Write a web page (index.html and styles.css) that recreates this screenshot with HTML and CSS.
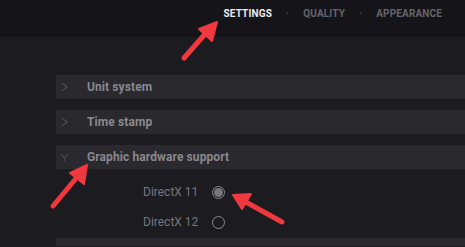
FILE: index.html
```html
<!DOCTYPE html>
<html>
<head>
<meta charset="utf-8">
<link rel="stylesheet" href="styles.css">
</head>
<body>
<header class="topbar">
  <nav class="nav">
    <span class="nav-item active">SETTINGS</span>
    <span class="nav-dot">·</span>
    <span class="nav-item">QUALITY</span>
    <span class="nav-dot">·</span>
    <span class="nav-item">APPEARANCE</span>
  </nav>
</header>
<main class="panel">
  <div class="row">
    <svg class="chev" width="31" height="24" viewBox="0 0 31 24"><polyline points="6,8 11,12 6,16" /></svg><span class="row-title">Unit system</span>
  </div>
  <div class="row">
    <svg class="chev" width="31" height="24" viewBox="0 0 31 24"><polyline points="6,8 11,12 6,16" /></svg><span class="row-title">Time stamp</span>
  </div>
  <div class="row">
    <svg class="chev" width="31" height="24" viewBox="0 0 31 24"><polyline points="5,9 8.5,13 12,9" /><line x1="8.5" y1="13" x2="8.5" y2="16" /></svg><span class="row-title">Graphic hardware support</span>
  </div>
  <div class="options">
    <div class="option"><span class="opt-label">DirectX 11</span><span class="radio checked"></span></div>
    <div class="option"><span class="opt-label">DirectX 12</span><span class="radio"></span></div>
  </div>
  <div class="row last"></div>
</main>
<svg class="arrows" width="465" height="247" viewBox="0 0 465 247">
  <g stroke="#f0393f" stroke-width="5" stroke-linecap="round" fill="#f0393f">
    <line x1="184" y1="58" x2="206" y2="33"/>
    <line x1="53" y1="206" x2="78" y2="176"/>
    <line x1="282" y1="222" x2="244" y2="201"/>
  </g>
  <g fill="#f0393f" stroke="#f0393f" stroke-width="2" stroke-linejoin="round">
    <polygon points="217,22 212,41 199,29"/>
    <polygon points="87,165 84,184 70,173"/>
    <polygon points="233,195 251,194 242,209"/>
  </g>
</svg>
</body>
</html>
```
FILE: styles.css
```css
html, body {
  margin: 0;
  padding: 0;
}
body {
  width: 465px;
  height: 247px;
  overflow: hidden;
  background: #1c1b20;
  font-family: Roboto, "Liberation Sans", sans-serif;
  position: relative;
}
.topbar {
  height: 37px;
  background: #151419;
  display: flex;
  justify-content: flex-end;
  align-items: flex-start;
  padding: 8px 23px 0 0;
  box-sizing: border-box;
}
.nav {
  display: flex;
  align-items: center;
  gap: 14px;
  font-size: 10px;
  line-height: 12px;
  font-weight: 700;
  letter-spacing: 0.15px;
}
.nav-item {
  color: #66656b;
}
.nav-item.active {
  color: #ececee;
}
.nav-dot {
  color: #46454b;
  font-size: 10px;
}
.panel {
  padding: 38px 0 0 56px;
  display: flex;
  flex-direction: column;
  height: 209px;
  box-sizing: border-box;
  overflow: hidden;
}
.row {
  height: 24px;
  flex: none;
  background: #2a292e;
  display: flex;
  align-items: center;
  margin-bottom: 11px;
}
.chev {
  flex: none;
  fill: none;
  stroke: #4f4e54;
  stroke-width: 1.1;
}
.row-title {
  color: #89888d;
  font-size: 12px;
  font-weight: 700;
  letter-spacing: 0.1px;
}
.options {
  margin-top: -11px;
  padding: 13px 0 6px 87px;
  display: flex;
  flex-direction: column;
  gap: 10px;
}
.option {
  display: flex;
  align-items: center;
  height: 20px;
}
.opt-label {
  width: 69px;
  color: #77767b;
  font-size: 12px;
}
.radio {
  width: 11px;
  height: 11px;
  border: 1px solid #8a898e;
  border-radius: 50%;
  box-sizing: content-box;
  display: flex;
  align-items: center;
  justify-content: center;
}
.radio.checked::after {
  content: "";
  width: 9px;
  height: 9px;
  border-radius: 50%;
  background: #77767b;
}
.row.last {
  margin-bottom: 0;
  height: 12px;
}
.arrows {
  position: absolute;
  left: 0;
  top: 0;
  pointer-events: none;
}
```
